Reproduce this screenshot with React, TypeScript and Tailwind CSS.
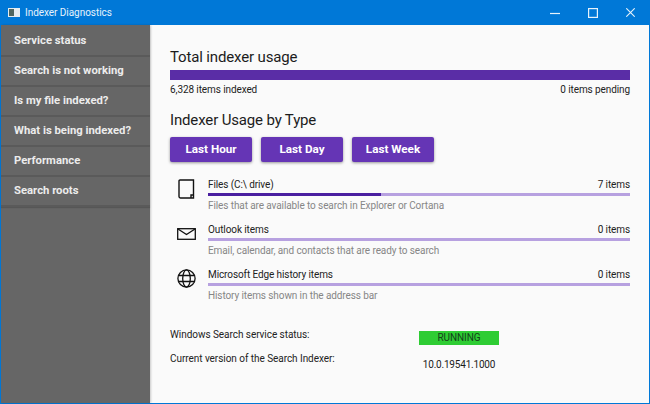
const menuItems = [
  'Service status',
  'Search is not working',
  'Is my file indexed?',
  'What is being indexed?',
  'Performance',
  'Search roots',
]

function FileIcon() {
  return (
    <svg width="17" height="20" viewBox="0 0 17 20" fill="none" stroke="#111" strokeWidth="1.4">
      <path d="M2 1h13.5v18H2.4A1.4 1.4 0 0 1 1 17.6V2a1 1 0 0 1 1-1z" />
      <path d="M13 19v-3h2.5" />
    </svg>
  )
}

function MailIcon() {
  return (
    <svg width="19" height="12" viewBox="0 0 19 12" fill="none" stroke="#111" strokeWidth="1.3">
      <rect x="0.7" y="0.7" width="17.6" height="10.6" />
      <path d="M1 1l8.5 5.5L18 1" />
    </svg>
  )
}

function GlobeIcon() {
  return (
    <svg width="19" height="19" viewBox="0 0 19 19" fill="none" stroke="#111" strokeWidth="1.3">
      <circle cx="9.5" cy="9.5" r="8.6" />
      <ellipse cx="9.5" cy="9.5" rx="3.8" ry="8.6" />
      <path d="M1.7 6.5h15.6M1.7 12.5h15.6" />
    </svg>
  )
}

function UsageRow({ icon, name, count, desc, fill }: { icon: React.ReactNode; name: string; count: string; desc: string; fill?: string }) {
  return (
    <div className="flex h-[45px]">
      <div className="w-[38px] pr-[5px] h-[25px] flex justify-center items-center">{icon}</div>
      <div className="flex-1 flex flex-col">
        <div className="flex justify-between h-[16px] leading-[18px] text-[#222] text-[10px] tracking-[-0.1px]">
          <span>{name}</span>
          <span>{count}</span>
        </div>
        <div className="h-[3px] mt-[1px] bg-[#b7a1e0]">
          {fill ? <div className={`h-full ${fill} bg-[#4a1fa0]`}></div> : null}
        </div>
        <div className="mt-[1px] leading-[17px] text-[10px] tracking-[-0.1px] text-[#868686]">{desc}</div>
      </div>
    </div>
  )
}

export default function App() {
  return (
    <div className="w-[650px] h-[404px] flex flex-col overflow-hidden bg-[#0078d7] font-['Roboto','Noto_Sans',sans-serif]">
      {/* Title bar */}
      <div className="h-[25px] flex items-center shrink-0 text-white">
        <div className="ml-[8px] w-[12px] h-[9px] p-[1px] bg-[#e4ecf1] flex">
          <div className="w-[5px] h-full bg-[#4f6660]"></div>
        </div>
        <span className="ml-[5px] text-[10px] tracking-[-0.05px] text-[#e6f2fb]">Indexer Diagnostics</span>
        <div className="ml-auto mr-[15px] flex items-center gap-[28px]">
          <svg width="10" height="10" viewBox="0 0 10 10" stroke="#e6f2fb" strokeWidth="1.2"><path d="M0 5.5h10" /></svg>
          <svg width="10" height="10" viewBox="0 0 10 10" fill="none" stroke="#e6f2fb" strokeWidth="1.2"><rect x="0.6" y="0.6" width="8.8" height="8.8" /></svg>
          <svg width="9" height="9" viewBox="0 0 9 9" stroke="#e6f2fb" strokeWidth="1.1"><path d="M0.3 0.3l8.4 8.4M8.7 0.3l-8.4 8.4" /></svg>
        </div>
      </div>

      <div className="flex-1 flex mx-[1px] mb-[1px] min-h-0 bg-[#fafafa]">
        {/* Sidebar */}
        <div className="w-[149px] shrink-0 pt-[2px] bg-[#666666] shadow-[1px_0_2px_rgba(0,0,0,0.2)] flex flex-col">
          {menuItems.map((item) => (
            <div key={item} className="h-[30px] pl-[13px] flex items-center text-[11.3px] font-bold text-[#ececec] bg-[#666666] border-b-[2px] border-[#5a5a5a] shadow-[0_1px_1px_rgba(0,0,0,0.15)]">
              {item}
            </div>
          ))}
        </div>

        {/* Content */}
        <div className="flex-1 flex flex-col pl-[20px] pr-[19px] pt-[20px]">
          <div className="h-[24px] leading-[24px] text-[15px] tracking-[-0.15px] text-[#1c1c1c]">Total indexer usage</div>
          <div className="h-[10px] mt-[1px] bg-[#5a2da6]"></div>
          <div className="mt-[2px] h-[16px] leading-[16px] flex justify-between text-[10px] tracking-[-0.1px] text-[#222]">
            <span>6,328 items indexed</span>
            <span>0 items pending</span>
          </div>
          <div className="mt-[10px] h-[24px] leading-[24px] text-[15px] tracking-[-0.15px] text-[#1c1c1c]">Indexer Usage by Type</div>
          <div className="mt-[5px] flex gap-[9px]">
            {['Last Hour', 'Last Day', 'Last Week'].map((label) => (
              <button key={label} className="w-[82px] h-[25px] pt-[1px] rounded-[2px] bg-[#6535b5] text-white text-[11.7px] font-bold shadow-[0_1px_3px_rgba(0,0,0,0.4)]">
                {label}
              </button>
            ))}
          </div>
          <div className="mt-[14px] flex flex-col">
            <UsageRow icon={<FileIcon />} name="Files (C:\ drive)" count="7 items" desc="Files that are available to search in Explorer or Cortana" fill="w-[41%]" />
            <UsageRow icon={<MailIcon />} name="Outlook items" count="0 items" desc="Email, calendar, and contacts that are ready to search" />
            <UsageRow icon={<GlobeIcon />} name="Microsoft Edge history items" count="0 items" desc="History items shown in the address bar" />
          </div>
          <div className="mt-[12px] flex text-[10px] tracking-[-0.05px] text-[#222]">
            <div className="w-[249px] flex flex-col">
              <div className="h-[24px] leading-[24px]">Windows Search service status:</div>
              <div className="h-[24px] leading-[24px]">Current version of the Search Indexer:</div>
            </div>
            <div className="w-[80px] flex flex-col items-center">
              <div className="mt-[8px] w-[80px] h-[14px] leading-[14px] text-center bg-[#2ecc33] text-[#14401a]">RUNNING</div>
              <div className="mt-[12px] leading-[16px] tracking-[-0.2px] text-[#1c1c1c]">10.0.19541.1000</div>
            </div>
          </div>
        </div>
      </div>
    </div>
  )
}
